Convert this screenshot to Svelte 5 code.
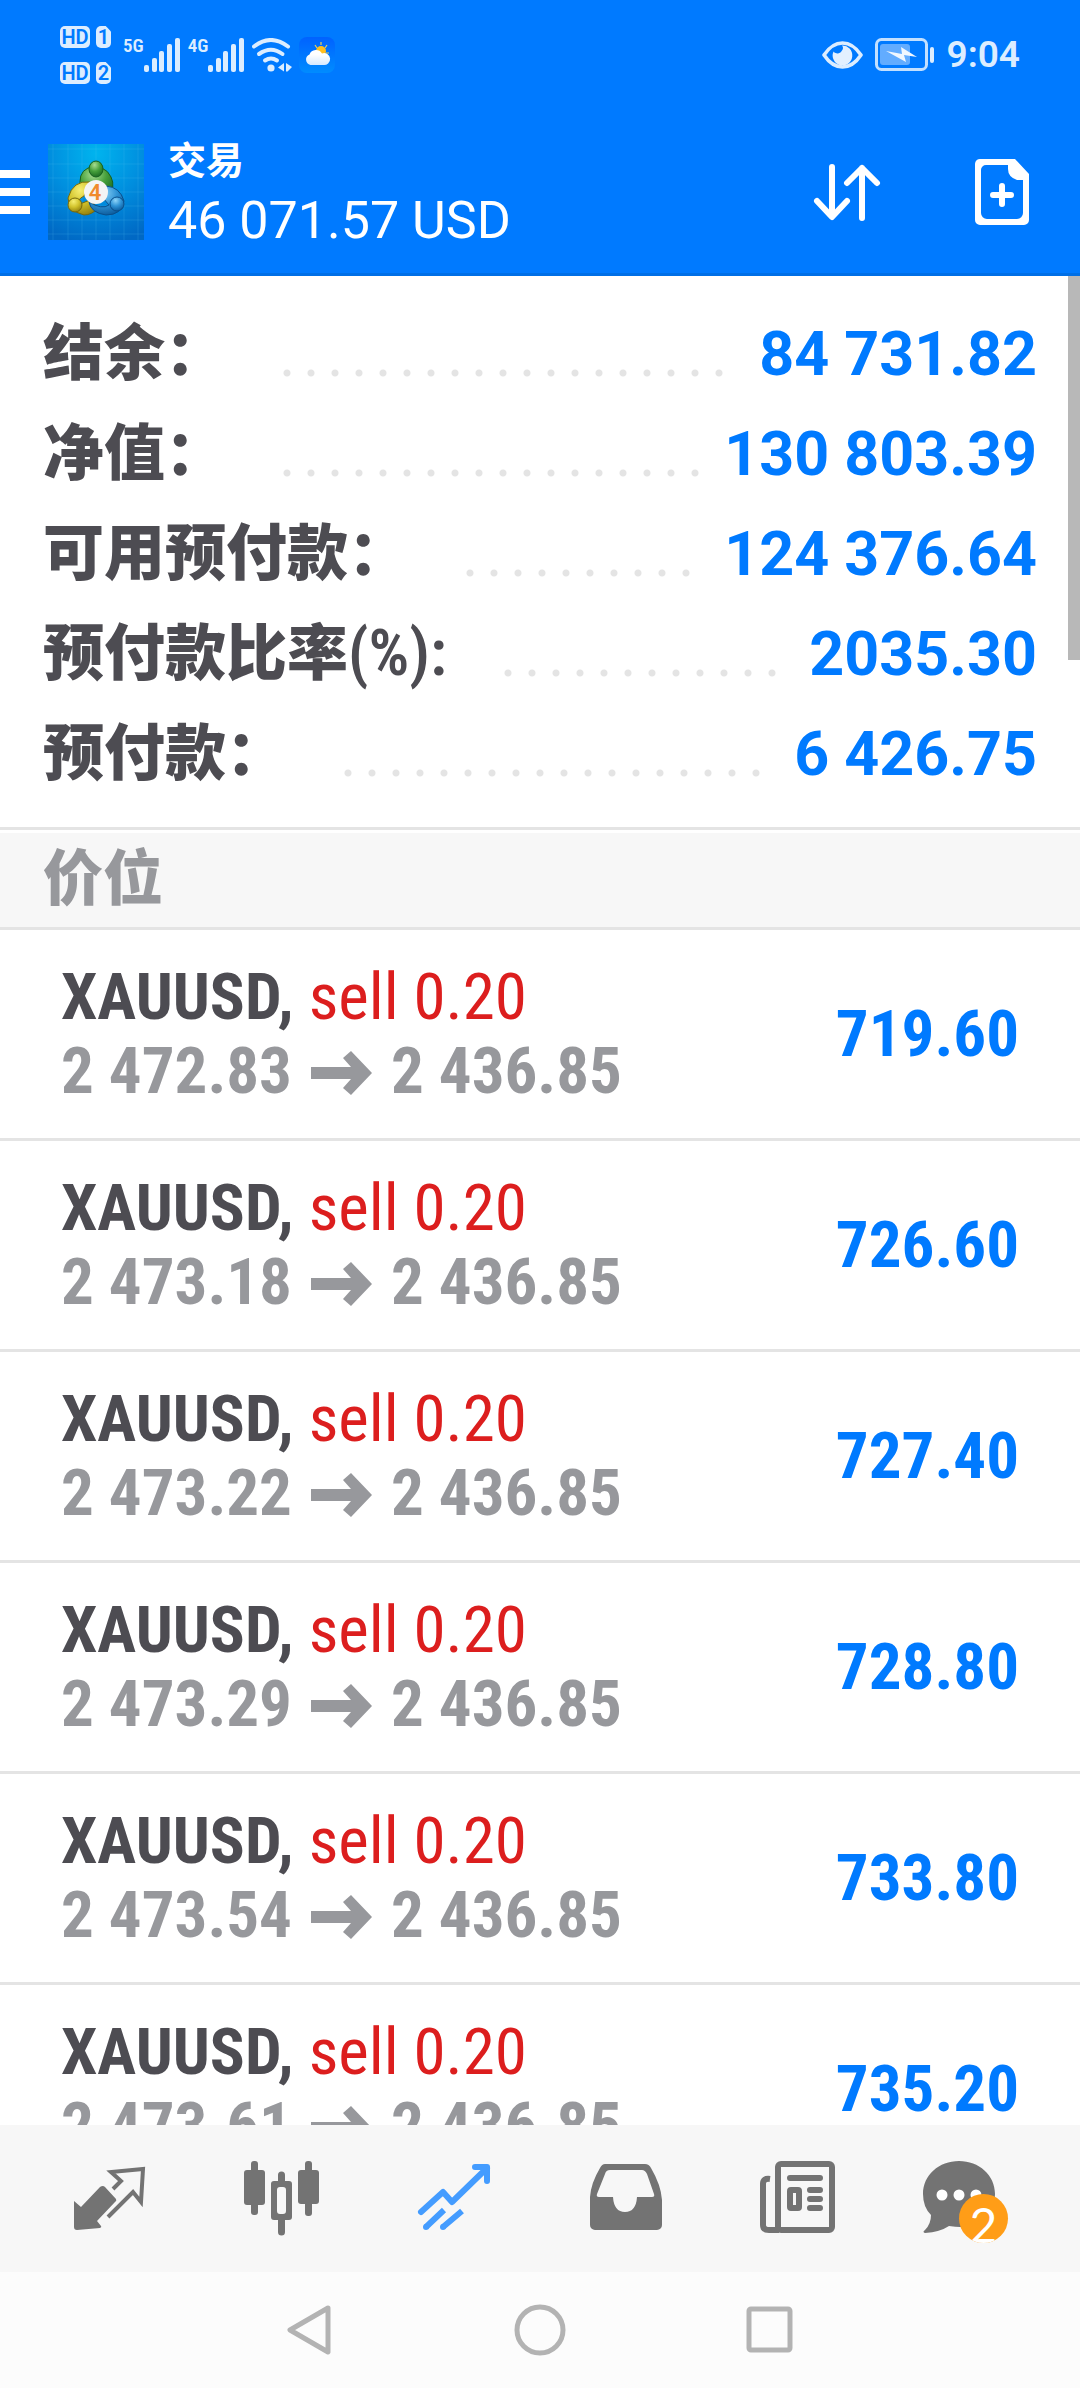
<script lang="ts">
	interface Summary {
		label: string;
		suffix?: string;
		value: string;
	}

	interface Position {
		symbol: string;
		side: 'buy' | 'sell';
		volume: string;
		open: string;
		current: string;
		profit: string;
	}

	const summary: Summary[] = [
		{ label: '结余：', value: '84 731.82' },
		{ label: '净值：', value: '130 803.39' },
		{ label: '可用预付款：', value: '124 376.64' },
		{ label: '预付款比率', suffix: '(%):', value: '2035.30' },
		{ label: '预付款：', value: '6 426.75' }
	];

	const opened: [string, string][] = [
		['2 472.83', '719.60'],
		['2 473.18', '726.60'],
		['2 473.22', '727.40'],
		['2 473.29', '728.80'],
		['2 473.54', '733.80'],
		['2 473.61', '735.20']
	];

	const positions: Position[] = opened.map(([open, profit]) => ({
		symbol: 'XAUUSD',
		side: 'sell',
		volume: '0.20',
		open,
		current: '2 436.85',
		profit
	}));

	const tabs = ['quotes', 'charts', 'trade', 'history', 'news', 'messages'];

	let activeTab = $state('trade');
	let unread = $state(2);
</script>

{#snippet signal()}
	<svg class="signal" width="36" height="34" viewBox="0 0 36 34" aria-hidden="true">
		<rect x="0" y="27" width="5" height="7" rx="2" />
		<rect x="8" y="20" width="5" height="14" rx="2" />
		<rect x="15" y="13" width="5" height="21" rx="2" />
		<rect x="23" y="6" width="5" height="28" rx="2" />
		<rect x="31" y="0" width="5" height="34" rx="2" />
	</svg>
{/snippet}

<div class="app">
	<div class="status">
		<div class="sims">
			{#each [1, 2] as sim}
				<div class="sim">
					<span class="hd">HD</span>
					<span class="card">{sim}</span>
				</div>
			{/each}
		</div>
		<div class="network">
			<span>5G</span>
			{@render signal()}
		</div>
		<div class="network">
			<span>4G</span>
			{@render signal()}
		</div>
		<svg class="wifi" width="40" height="34" viewBox="0 0 40 34" aria-hidden="true">
			<g fill="none" stroke="#dcedff" stroke-width="4" stroke-linecap="round">
				<path d="M2 8.500Q19 -4.500 36 8.500" />
				<path d="M7 16Q19 7.500 30.500 16" />
				<path d="M13 22.500Q19 18.500 25 22.500" />
			</g>
			<circle cx="19" cy="30" r="3.600" fill="#dcedff" />
			<path d="M32 25v8.500L26 29.500zM34 25l6 4l-4.500 4.500H34z" fill="#dcedff" />
		</svg>
		<svg class="weather" width="36" height="36" viewBox="0 0 36 36" aria-hidden="true">
			<defs>
				<linearGradient id="sky" x1="0" y1="0" x2="0" y2="1">
					<stop offset="0" stop-color="#0062ff" />
					<stop offset="1" stop-color="#008cff" />
				</linearGradient>
				<linearGradient id="cloud" x1="0" y1="0" x2="0" y2="1">
					<stop offset="0.300" stop-color="#fff" />
					<stop offset="1" stop-color="#d5e9ff" />
				</linearGradient>
			</defs>
			<rect width="36" height="36" rx="8" fill="url(#sky)" />
			<path d="M22 5v3M16 8l2 3M28 8l-2 3M30 16h-3M29 22l-2-2" stroke="#e8cf5a" stroke-width="1.200" />
			<circle cx="22" cy="14" r="5" fill="#ffbf1f" />
			<path d="M11.500 28a5.500 5.500 0 0 1-1-10.500a7 7 0 0 1 12.500-1a6 6 0 1 1 1 11.500z" fill="url(#cloud)" />
		</svg>
		<div class="system">
			<svg width="41" height="28" viewBox="0 0 41 28" aria-hidden="true">
				<path d="M2 14Q10 2 20.500 2T39 14Q31 26 20.500 26T2 14z" fill="none" stroke="#dcedff" stroke-width="3.600" stroke-linejoin="round" />
				<path d="M20 4.500a9.800 10 0 1 1-8.500 6a5 5 0 0 0 8.500-1a4 4 0 0 0 0-5z" fill="#e3f0ff" />
			</svg>
			<svg width="60" height="34" viewBox="0 0 60 34" aria-hidden="true">
				<rect x="1.500" y="1.500" width="50" height="30" rx="5" fill="none" stroke="#c3e0ff" stroke-width="3" />
				<rect x="5" y="6" width="30" height="21" rx="3" fill="#62acff" />
				<path d="M11 13l16 3l-1-7l16 10l-13-2l2 7z" fill="#f0f7ff" />
				<rect x="55" y="9" width="4" height="16" rx="2" fill="#dcedff" />
			</svg>
			<time>9:04</time>
		</div>
	</div>

	<header class="header">
		<button type="button" class="menu" aria-label="Menu">
			<svg width="30" height="44" viewBox="0 0 30 44" aria-hidden="true">
				<path d="M0 0h30v8H0zM0 18h30v8H0zM0 36h30v8H0z" fill="#fff" />
			</svg>
		</button>
		<svg class="logo" width="96" height="96" viewBox="0 0 96 96" aria-hidden="true">
			<defs>
				<radialGradient id="tile" cx="0.500" cy="0.100" r="0.950">
					<stop offset="0" stop-color="#00b4ee" />
					<stop offset="0.500" stop-color="#008fdf" />
					<stop offset="1" stop-color="#0068c4" />
				</radialGradient>
				<radialGradient id="green" cx="0.400" cy="0.250" r="0.800">
					<stop offset="0" stop-color="#a8dd91" />
					<stop offset="0.500" stop-color="#46a03b" />
					<stop offset="1" stop-color="#17651f" />
				</radialGradient>
				<radialGradient id="yellow" cx="0.400" cy="0.250" r="0.800">
					<stop offset="0" stop-color="#f6ee72" />
					<stop offset="0.500" stop-color="#d2c32c" />
					<stop offset="1" stop-color="#8f7d0d" />
				</radialGradient>
				<radialGradient id="blue" cx="0.400" cy="0.250" r="0.800">
					<stop offset="0" stop-color="#8ed4f8" />
					<stop offset="0.500" stop-color="#2e93d6" />
					<stop offset="1" stop-color="#0a5798" />
				</radialGradient>
			</defs>
			<rect width="96" height="96" fill="url(#tile)" />
			<path d="M5 0v96M20 0v96M34 0v96M48 0v96M62 0v96M76 0v96M90 0v96M0 5h96M0 20h96M0 34h96M0 48h96M0 62h96M0 76h96M0 90h96" stroke="#5cc5f5" stroke-opacity="0.180" />
			<path d="M33 46Q29 29 40 24Q57 20 63 33Q68 43 60 53L52 42Q48 32 42 41z" fill="url(#green)" stroke="#17611f" />
			<path d="M42 38Q25 36 20 54Q20 67 36 71Q44 71 50 64L42 56L32 60Q28 56 36 52z" fill="url(#yellow)" stroke="#75680c" />
			<path d="M58 42Q72 43 76 57Q74 71 58 71Q43 69 41 58Q54 66 61 61L55 54z" fill="url(#blue)" stroke="#0a4f8b" />
			<ellipse cx="48" cy="25" rx="7" ry="8" fill="url(#green)" stroke="#17611f" />
			<circle cx="27" cy="61" r="7" fill="url(#yellow)" stroke="#75680c" />
			<circle cx="69" cy="60" r="7" fill="url(#blue)" stroke="#0a4f8b" />
			<circle cx="48" cy="48" r="12" fill="#f4f4f4" />
			<text x="47" y="56" class="logo-digit">4</text>
		</svg>
		<div class="account">
			<h1>交易</h1>
			<p>46 071.57 USD</p>
		</div>
		<div class="actions">
			<button type="button" aria-label="Sort">
				<svg width="68" height="68" viewBox="0 0 68 68" aria-hidden="true">
					<path d="M19 9v49M4 43l15 16l15-16M49 60V10M34 25l15-15l15 15" fill="none" stroke="#fff" stroke-width="6" stroke-linecap="round" stroke-linejoin="round" />
				</svg>
			</button>
			<button type="button" aria-label="New order">
				<svg width="54" height="68" viewBox="0 0 54 68" aria-hidden="true">
					<path d="M6 1h34l14 15v46a5 5 0 0 1-5 5H5a5 5 0 0 1-5-5V6a5 5 0 0 1 6-5zM11 7a5 5 0 0 0-5 5v43a6 6 0 0 0 6 6h30a6 6 0 0 0 6-6V22h-6q-9-3-9-11V7z" fill="#fff" fill-rule="evenodd" />
					<path d="M27 28v18M18 37h18" stroke="#fff" stroke-width="6" stroke-linecap="round" />
				</svg>
			</button>
		</div>
	</header>

	<main class="content">
		<dl class="summary">
			{#each summary as item}
				<div class="summary-row">
					<dt>{item.label}{#if item.suffix}<span>{item.suffix}</span>{/if}</dt>
					<dd class="leader" aria-hidden="true"><i></i></dd>
					<dd>{item.value}</dd>
				</div>
			{/each}
		</dl>

		<h2 class="section">价位</h2>

		<ul class="positions">
			{#each positions as position}
				<li class="position">
					<div>
						<p class="position-title">
							<b>{position.symbol},</b>
							<span class="position-side position-side--{position.side}">{position.side} {position.volume}</span>
						</p>
						<p class="position-prices">
							{position.open}
							<svg width="61" height="44" viewBox="0 0 61 44" role="img" aria-label="to">
								<path d="M0 16h40L32 7l8-7l21 22l-21 22l-8-7l8-9H0z" fill="#97989c" />
							</svg>
							{position.current}
						</p>
					</div>
					<strong class="position-profit">{position.profit}</strong>
				</li>
			{/each}
		</ul>
		<div class="scrollbar"></div>
	</main>

	<nav class="tabs">
		{#each tabs as tab}
			<button
				type="button"
				class="tab"
				class:tab--active={activeTab === tab}
				aria-label={tab}
				onclick={() => (activeTab = tab)}
			>
				<svg width="96" height="96" viewBox="0 0 96 96" aria-hidden="true">
					{#if tab === 'quotes'}
						<path d="M12 50l7 6l19-20q3-2 5 0l11 12q1 2-1 3L35 70l4 5q1 1-1 2L15 79q-3 0-3-3z" fill="currentColor" />
						<path d="M51 38l8-8l-10-9l32-3l-2 33l-8-10l-25 25" fill="none" stroke="currentColor" stroke-width="4" />
					{:else if tab === 'charts'}
						<g fill="currentColor">
							<rect x="17" y="10" width="7" height="54" rx="3" />
							<rect x="10" y="19" width="21" height="35" rx="3" />
							<rect x="71" y="10" width="7" height="55" rx="3" />
							<rect x="64" y="19" width="21" height="34" rx="3" />
							<path d="M44 30v-6a3.500 3.500 0 0 1 7 0v6h4a3 3 0 0 1 3 3v33a3 3 0 0 1-3 3h-4v12a3.500 3.500 0 0 1-7 0V69h-4a3 3 0 0 1-3-3V33a3 3 0 0 1 3-3zM46 36a3 3 0 0 0-3 3v21a3 3 0 0 0 3 3h3a3 3 0 0 0 3-3V39a3 3 0 0 0-3-3z" fill-rule="evenodd" />
						</g>
					{:else if tab === 'trade'}
						<g fill="none" stroke="currentColor" stroke-width="6" stroke-linejoin="round">
							<path d="M15 61l22-20l9 10l35-34" stroke-linecap="round" />
							<path d="M69 16h12v14" stroke-linecap="round" />
							<path d="M38 59L20 76M56 60L37 76" />
						</g>
						<circle cx="20" cy="76" r="3" fill="currentColor" />
						<circle cx="37" cy="76" r="3" fill="currentColor" />
					{:else if tab === 'history'}
						<path d="M27 13h40q4 0 6 4q10 17 11 32v25a5 5 0 0 1-5 5H17a5 5 0 0 1-5-5V46q1-14 10-29q2-4 5-4zM32 19q-4 0-5 4l-8 20q-1 3 2 3h14q1 15 12 15t12-15h15q3 0 2-3l-7-20q-2-4-5-4z" fill="currentColor" fill-rule="evenodd" />
					{:else if tab === 'news'}
						<g fill="none" stroke="currentColor" stroke-width="6">
							<rect x="28" y="13" width="54" height="66" rx="3" />
							<path d="M20 28q-7-1-7 5v41q0 5 6 5h10" />
							<path d="M40 27h30M60 39h10M60 48h10M60 57h10" stroke-linecap="round" />
							<rect x="40" y="39" width="9" height="18" rx="1" />
						</g>
					{:else}
						<path d="M37 10C57 10 73 24 73 43S57 77 38 76q-4 0-11-1Q18 81 3 82q-3-1 0-3q6-6 6-15Q1 56 1 43C1 24 17 10 37 10z" fill="currentColor" />
						<g fill="#fff">
							<circle cx="20" cy="44" r="5.500" />
							<circle cx="37" cy="44" r="5.500" />
							<circle cx="54" cy="44" r="5.500" />
						</g>
					{/if}
				</svg>
				{#if tab === 'messages' && unread > 0}
					<span class="badge">{unread}</span>
				{/if}
			</button>
		{/each}
	</nav>

	<div class="system-nav">
		<button type="button" aria-label="Back">
			<svg width="52" height="52" viewBox="0 0 52 52" aria-hidden="true">
				<path d="M44 4L6 26l38 22z" />
			</svg>
		</button>
		<button type="button" aria-label="Home">
			<svg width="52" height="52" viewBox="0 0 52 52" aria-hidden="true">
				<circle cx="26" cy="26" r="23" />
			</svg>
		</button>
		<button type="button" aria-label="Recent apps">
			<svg width="52" height="52" viewBox="0 0 52 52" aria-hidden="true">
				<rect x="5" y="5" width="41" height="41" rx="2" />
			</svg>
		</button>
	</div>
</div>

<style>
	:global(body) {
		margin: 0;
	}

	.app {
		display: flex;
		flex-direction: column;
		height: 100vh;
		overflow: hidden;
		background: #fff;
		font-family: Roboto, 'Noto Sans CJK SC', sans-serif;
	}

	h1,
	h2,
	p,
	dl,
	dd,
	ul {
		margin: 0;
		padding: 0;
	}

	svg {
		display: block;
		flex: none;
	}

	button {
		display: flex;
		align-items: center;
		justify-content: center;
		padding: 0;
		border: 0;
		background: none;
		color: inherit;
		cursor: pointer;
	}

	.status {
		display: flex;
		align-items: center;
		height: 110px;
		padding: 0 60px;
		background: #007aff;
		color: #dcedff;
	}

	.sims {
		display: flex;
		flex-direction: column;
		gap: 14px;
		margin-right: 12px;
	}

	.sim {
		display: flex;
		gap: 6px;
	}

	.hd,
	.card {
		height: 22px;
		border-radius: 5px;
		background: #dcedff;
		color: #007aff;
		font-size: 20px;
		font-weight: 600;
		line-height: 22px;
		text-align: center;
	}

	.hd {
		width: 30px;
	}

	.card {
		width: 15px;
		clip-path: polygon(0 0, 65% 0, 100% 25%, 100% 100%, 0 100%);
	}

	.network {
		display: flex;
		align-items: flex-start;
		margin-right: 8px;
		font-family: 'Roboto Condensed', Roboto, sans-serif;
		font-size: 19px;
		font-weight: 600;
		line-height: 16px;
	}

	.signal {
		fill: #dcedff;
	}

	.weather {
		margin-left: 7px;
	}

	.system {
		display: flex;
		align-items: center;
		gap: 12px;
		margin-left: auto;
	}

	.system time {
		font-size: 37px;
		font-weight: 600;
		line-height: 40px;
	}

	.header {
		display: flex;
		align-items: center;
		height: 163px;
		padding-right: 51px;
		border-bottom: 3px solid #006fe6;
		background: #007aff;
		color: #fff;
	}

	.menu {
		margin-right: 18px;
	}

	.logo-digit {
		fill: #f08a2c;
		font-family: Roboto, sans-serif;
		font-size: 22px;
		font-weight: 600;
		text-anchor: middle;
	}

	.account {
		flex: 1;
		padding: 2px 0 0 24px;
	}

	.account h1 {
		font-size: 38px;
		font-weight: 700;
		line-height: 56px;
	}

	.account p {
		font-size: 52px;
		line-height: 64px;
	}

	.actions {
		display: flex;
		gap: 94px;
	}

	.content {
		position: relative;
		flex: 1;
		min-height: 0;
		overflow: hidden;
	}

	.scrollbar {
		position: absolute;
		top: 0;
		right: 0;
		width: 12px;
		height: 384px;
		background: #b8b8b8;
	}

	.summary {
		padding: 28px 43px 23px;
		border-bottom: 3px solid #e4e4e4;
	}

	.summary-row {
		display: flex;
		align-items: center;
		height: 100px;
		color: #007aff;
		font-size: 61px;
		font-weight: 700;
		line-height: 100px;
		white-space: nowrap;
	}

	.summary-row dt {
		color: #4d4c52;
		font-family: 'Roboto Condensed', 'Noto Sans CJK SC Black', 'Noto Sans CJK SC', sans-serif;
		font-weight: 400;
	}

	.summary-row dt span {
		font-size: 64px;
		font-weight: 600;
	}

	.leader {
		display: flex;
		flex: 1;
		align-items: center;
		height: 100px;
		margin-left: 57px;
	}

	/* only whole dots are drawn, the remainder stays blank before the value */
	.leader i {
		width: round(down, 100%, 24px);
		height: 8px;
		margin-top: 38px;
		background: radial-gradient(circle at 4px 4px, #e4e4e4 3px, transparent 4px) 0 0 / 24px 8px repeat-x;
	}

	.section {
		height: 94px;
		padding: 0 43px;
		border-top: 3px solid #fff;
		border-bottom: 3px solid #e4e4e4;
		background: #f7f7f7;
		color: #97989c;
		font-family: 'Noto Sans CJK SC Black', 'Noto Sans CJK SC', sans-serif;
		font-size: 60px;
		font-weight: 400;
		line-height: 82px;
	}

	.positions {
		list-style: none;
	}

	.position {
		display: flex;
		align-items: center;
		justify-content: space-between;
		height: 208px;
		padding: 0 61px;
		border-bottom: 3px solid #e4e4e4;
		font-family: 'Roboto Condensed', Roboto, sans-serif;
		font-size: 65px;
		white-space: nowrap;
	}

	.position-title {
		color: #4d4c52;
		line-height: 74px;
	}

	.position-side--sell {
		color: #dc1e1e;
	}

	.position-side--buy {
		color: #007aff;
	}

	.position-prices {
		display: flex;
		align-items: center;
		gap: 19px;
		color: #97989c;
		font-weight: 700;
		line-height: 74px;
	}

	.position-prices svg {
		margin-top: 4px;
	}

	.position-profit {
		color: #007aff;
		font-weight: 700;
	}

	.tabs {
		display: flex;
		justify-content: space-around;
		height: 147px;
		padding: 0 24px;
		background: #f7f7f7;
		color: #737373;
	}

	.tab {
		position: relative;
		flex: 1;
	}

	.tab--active {
		color: #449cff;
	}

	.badge {
		position: absolute;
		top: 69px;
		left: 50%;
		margin-left: -11px;
		width: 49px;
		height: 49px;
		overflow: hidden;
		border-radius: 50%;
		background: #ff9d17;
		color: #fff;
		font-family: Lato, sans-serif;
		font-size: 48px;
		line-height: 62px;
		text-align: center;
	}

	.system-nav {
		display: flex;
		height: 116px;
		padding: 0 18%;
		background: #fcfcfc;
	}

	.system-nav button {
		flex: 1;
	}

	.system-nav svg {
		fill: none;
		stroke: #b3b3b3;
		stroke-width: 5px;
		stroke-linejoin: round;
	}
</style>
